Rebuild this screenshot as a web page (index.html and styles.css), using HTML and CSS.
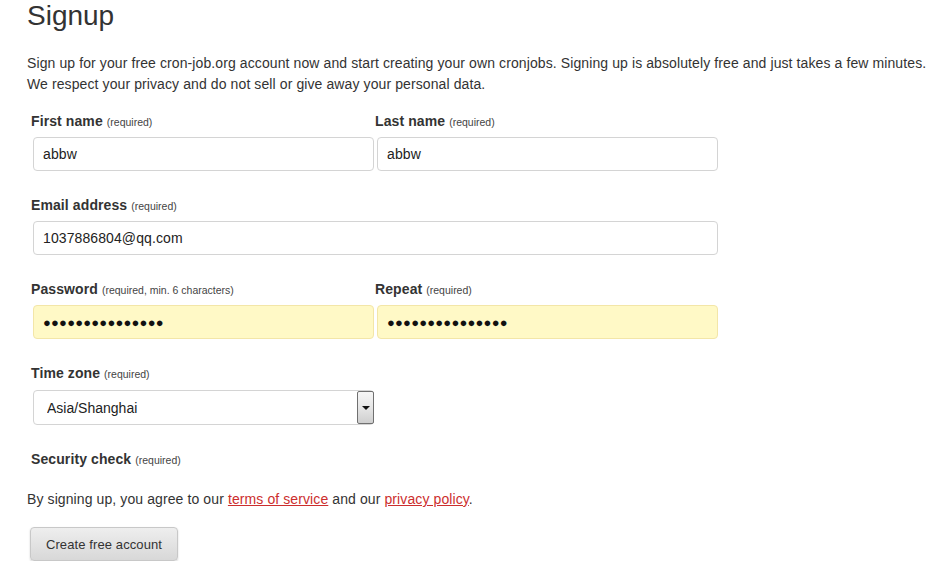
FILE: index.html
```html
<!DOCTYPE html>
<html lang="en">
<head>
<meta charset="utf-8">
<title>Signup</title>
<link rel="stylesheet" href="styles.css">
</head>
<body>
<main class="page">
  <h1 class="title">Signup</h1>
  <p class="intro">Sign up for your free cron-job.org account now and start creating your own cronjobs. Signing up is absolutely free and just takes a few minutes.<br>We respect your privacy and do not sell or give away your personal data.</p>

  <form class="form">
    <div class="row two">
      <div class="field">
        <label class="label">First name <span class="req">(required)</span></label>
        <input class="input" type="text" value="abbw">
      </div>
      <div class="field">
        <label class="label">Last name <span class="req">(required)</span></label>
        <input class="input" type="text" value="abbw">
      </div>
    </div>

    <div class="row one">
      <div class="field">
        <label class="label">Email address <span class="req">(required)</span></label>
        <input class="input input-wide" type="text" value="1037886804@qq.com">
      </div>
    </div>

    <div class="row two">
      <div class="field">
        <label class="label">Password <span class="req">(required, min. 6 characters)</span></label>
        <input class="input input-auto dots" type="text" value="●●●●●●●●●●●●●●●">
      </div>
      <div class="field">
        <label class="label">Repeat <span class="req">(required)</span></label>
        <input class="input input-auto dots" type="text" value="●●●●●●●●●●●●●●●">
      </div>
    </div>

    <div class="row two">
      <div class="field">
        <label class="label">Time zone <span class="req">(required)</span></label>
        <div class="select-wrap">
          <select class="select">
            <option>Asia/Shanghai</option>
          </select>
          <span class="select-btn"><span class="arrow"></span></span>
        </div>
      </div>
    </div>

    <div class="row one security">
      <div class="field">
        <label class="label">Security check <span class="req">(required)</span></label>
      </div>
    </div>
  </form>

  <p class="terms">By signing up, you agree to our <a href="#" class="link">terms of service</a> and our <a href="#" class="link">privacy policy</a>.</p>

  <button class="btn" type="button">Create free account</button>
</main>
</body>
</html>
```

FILE: styles.css
```css
html, body {
  margin: 0;
  padding: 0;
  background: #ffffff;
}

body {
  font-family: "Liberation Sans", Arial, sans-serif;
  color: #333333;
  letter-spacing: 0.1px;
}

.page {
  padding-left: 27px;
}

.title {
  margin: 0;
  font-size: 28px;
  font-weight: normal;
  line-height: 32px;
  letter-spacing: 0;
  color: #333333;
}

.intro {
  margin: 21px 0 0 0;
  font-size: 14px;
  line-height: 21px;
  white-space: nowrap;
}

.form {
  margin: 16px 0 0 3px;
  width: 688px;
}

.row {
  display: grid;
  grid-template-columns: 344px 344px;
  margin-bottom: 24px;
}

.row.one {
  grid-template-columns: 688px;
}

.field {
  display: flex;
  flex-direction: column;
}

.label {
  display: block;
  height: 20px;
  padding-left: 1px;
  font-size: 14px;
  font-weight: bold;
  line-height: 20px;
  color: #333333;
}

.req {
  font-size: 10.5px;
  font-weight: normal;
  line-height: 1;
  letter-spacing: 0;
  color: #444444;
}

.input {
  box-sizing: border-box;
  margin: 6px 0 0 3px;
  width: 341px;
  height: 34px;
  padding: 0 9px;
  border: 1px solid #d4d4d4;
  border-radius: 4px;
  background: #ffffff;
  font-family: "Liberation Sans", Arial, sans-serif;
  font-size: 14px;
  letter-spacing: 0.1px;
  color: #222222;
  outline: none;
}

.input-wide {
  width: 685px;
}

.input-auto {
  background: #fff9c6;
  border-color: #f3e6a8;
}

.dots {
  font-size: 13px;
  letter-spacing: 0.2px;
  color: #111111;
}

.select-wrap {
  position: relative;
  margin: 7px 0 0 3px;
  width: 341px;
  height: 35px;
}

.select {
  -webkit-appearance: none;
  appearance: none;
  box-sizing: border-box;
  width: 100%;
  height: 100%;
  padding: 0 0 0 13px;
  border: 1px solid #d4d4d4;
  border-radius: 4px;
  background: #ffffff;
  font-family: "Liberation Sans", Arial, sans-serif;
  font-size: 14px;
  color: #222222;
  outline: none;
}

.select-btn {
  position: absolute;
  top: 1px;
  right: 0;
  box-sizing: border-box;
  width: 17px;
  height: 33px;
  border: 1px solid #707070;
  border-radius: 2px;
  background: linear-gradient(to bottom, #f6f6f6 0%, #e6e6e6 50%, #cfcfcf 100%);
  display: flex;
  align-items: center;
  justify-content: center;
  pointer-events: none;
}

.arrow {
  width: 0;
  height: 0;
  border-left: 4px solid transparent;
  border-right: 4px solid transparent;
  border-top: 4px solid #111111;
}

.security {
  margin-bottom: 20px;
}

.terms {
  margin: 0;
  font-size: 14px;
  line-height: 21px;
}

.link {
  color: #cc2e2e;
  text-decoration: underline;
}

.btn {
  display: block;
  box-sizing: border-box;
  margin: 17px 0 0 3px;
  width: 148px;
  height: 34px;
  padding: 0;
  border: 1px solid #c8c8c8;
  border-radius: 4px;
  background: linear-gradient(to bottom, #eeeeee 0%, #d8d8d8 100%);
  box-shadow: 0 1px 2px rgba(0, 0, 0, 0.18);
  font-family: "Liberation Sans", Arial, sans-serif;
  font-size: 13px;
  letter-spacing: 0.1px;
  color: #333333;
  cursor: pointer;
}
```
